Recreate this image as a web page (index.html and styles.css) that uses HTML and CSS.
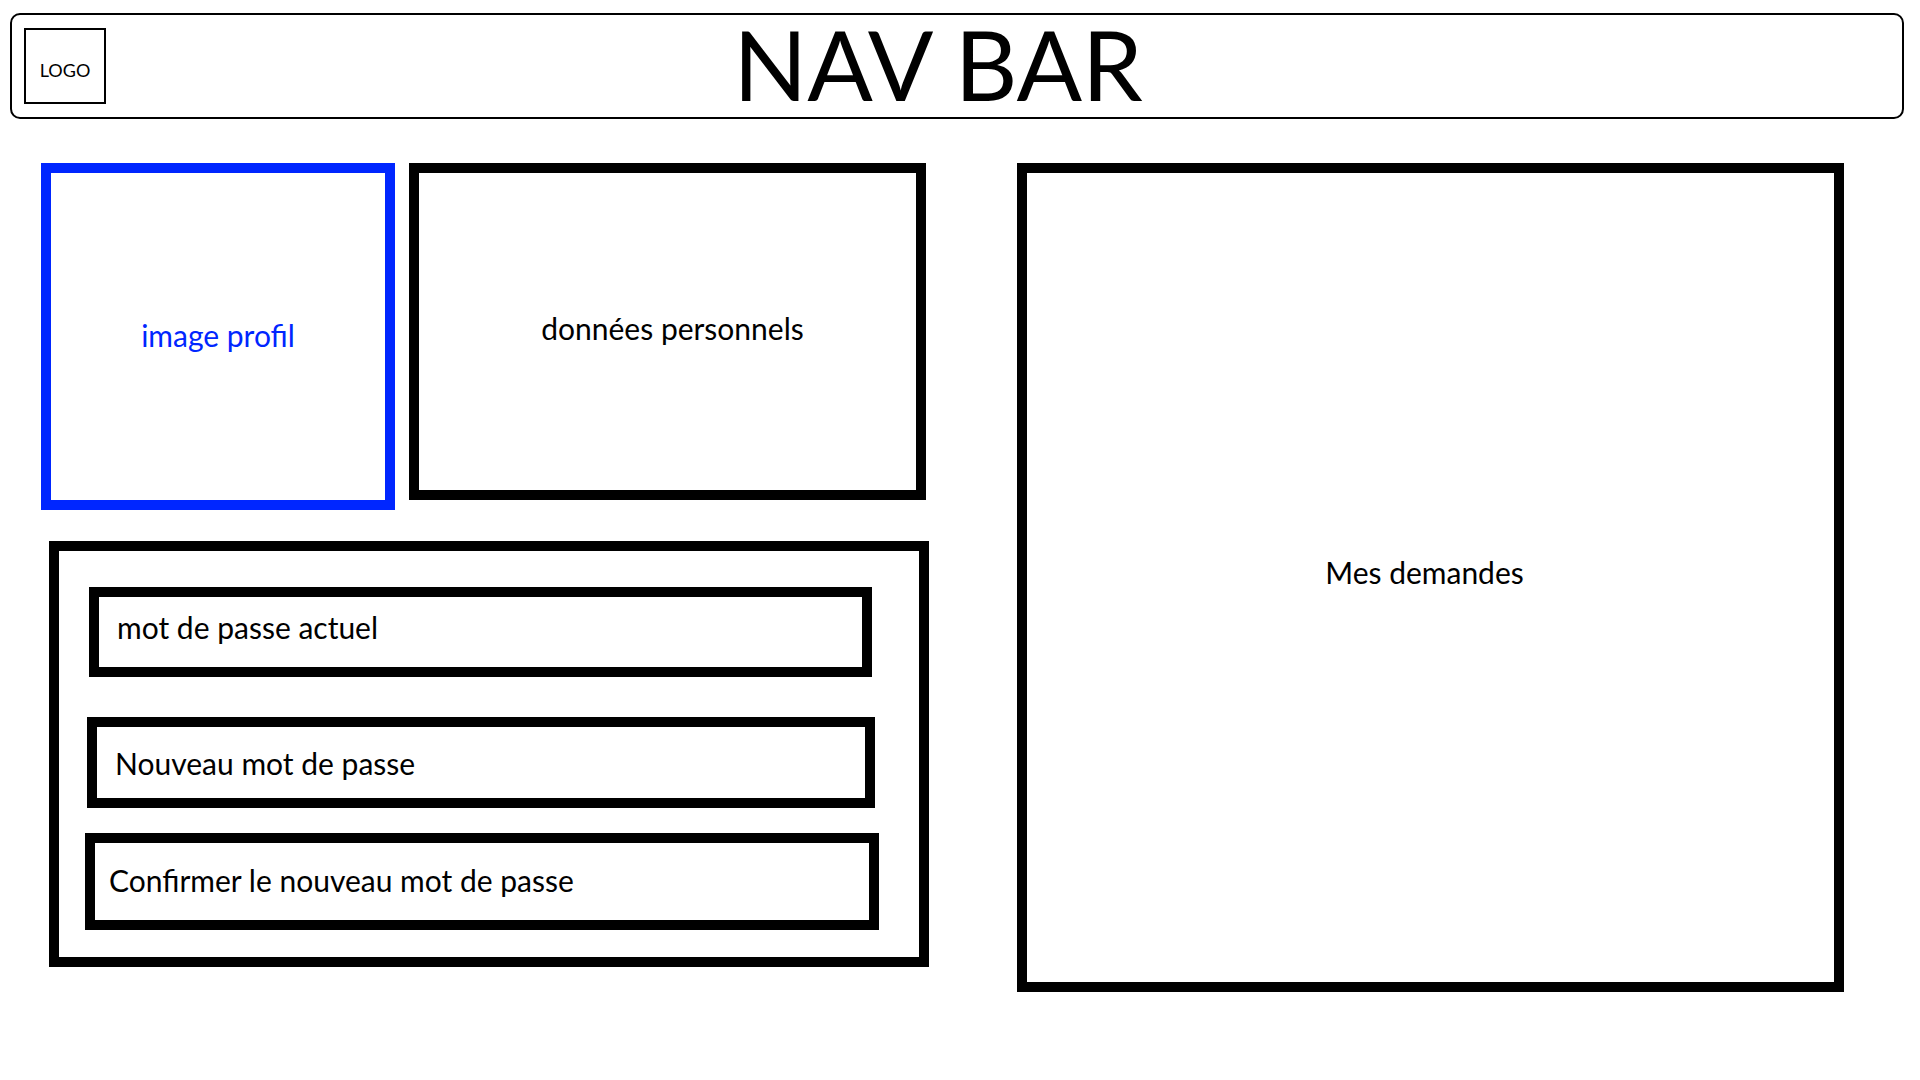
FILE: index.html
```html
<!DOCTYPE html>
<html lang="fr">
<head>
  <meta charset="utf-8">
  <meta name="viewport" content="width=device-width, initial-scale=1">
  <title>Profil</title>
  <link rel="stylesheet" href="styles.css">
</head>
<body>
  <header class="navbar">
    <div class="logo">LOGO</div>
    <h1 class="navbar-title">NAV BAR</h1>
  </header>
  <main class="page">
    <div class="account">
      <div class="identity">
        <section class="panel picture">image profil</section>
        <section class="panel personal">données personnels</section>
      </div>
      <form class="password-form">
        <input class="field current" type="password" placeholder="mot de passe actuel" aria-label="mot de passe actuel">
        <input class="field new" type="password" placeholder="Nouveau mot de passe" aria-label="Nouveau mot de passe">
        <input class="field confirm" type="password" placeholder="Confirmer le nouveau mot de passe" aria-label="Confirmer le nouveau mot de passe">
      </form>
    </div>
    <section class="panel requests">Mes demandes</section>
  </main>
</body>
</html>
```
FILE: styles.css
```css
* {
  box-sizing: border-box;
}

body {
  margin: 0;
  background: #fff;
  color: #000;
  font-family: Lato, "Open Sans", sans-serif;
  font-size: 30px;
  line-height: 36px;
}

.navbar {
  display: grid;
  grid-template-columns: 82px 1fr 82px;
  align-items: center;
  min-height: 106px;
  margin: 13px 16px 0 10px;
  padding: 0 12px;
  border: 2px solid #000;
  border-radius: 10px;
}

.logo {
  display: flex;
  align-items: center;
  justify-content: center;
  height: 76px;
  padding-top: 8px;
  border: 2px solid #000;
  font-size: 18px;
}

.navbar-title {
  margin: 0;
  padding: 0 38px 4px 0;
  font-size: 97px;
  font-weight: 400;
  line-height: 96px;
  text-align: center;
}

.page {
  display: grid;
  grid-template-columns: 888fr 827fr;
  column-gap: 88px;
  align-items: start;
  padding: 44px 76px 44px 41px;
}

.identity {
  display: grid;
  grid-template-columns: 354fr 517fr;
  column-gap: 14px;
  align-items: start;
  margin-right: 3px;
}

.panel {
  display: flex;
  align-items: center;
  justify-content: center;
  border: 10px solid #000;
}

.picture {
  min-height: 347px;
  padding-bottom: 4px;
  border-color: #0026ff;
  color: #0026ff;
}

.personal {
  min-height: 337px;
  padding: 0 0 8px 10px;
}

.requests {
  min-height: 829px;
  padding: 0 12px 12px 0;
}

.password-form {
  display: flex;
  flex-direction: column;
  margin: 31px 0 0 8px;
  padding: 36px 40px 27px 26px;
  border: 10px solid #000;
}

.field {
  height: 90px;
  padding: 0 18px;
  border: 10px solid #000;
  border-radius: 0;
  background: #fff;
  color: #000;
  font: inherit;
}

.field::placeholder {
  color: #000;
  opacity: 1;
}

.current {
  margin: 0 7px 40px 4px;
  padding-bottom: 10px;
}

.new {
  height: 91px;
  margin: 0 4px 25px 2px;
}

.confirm {
  height: 97px;
  padding: 0 14px 4px;
}
```
